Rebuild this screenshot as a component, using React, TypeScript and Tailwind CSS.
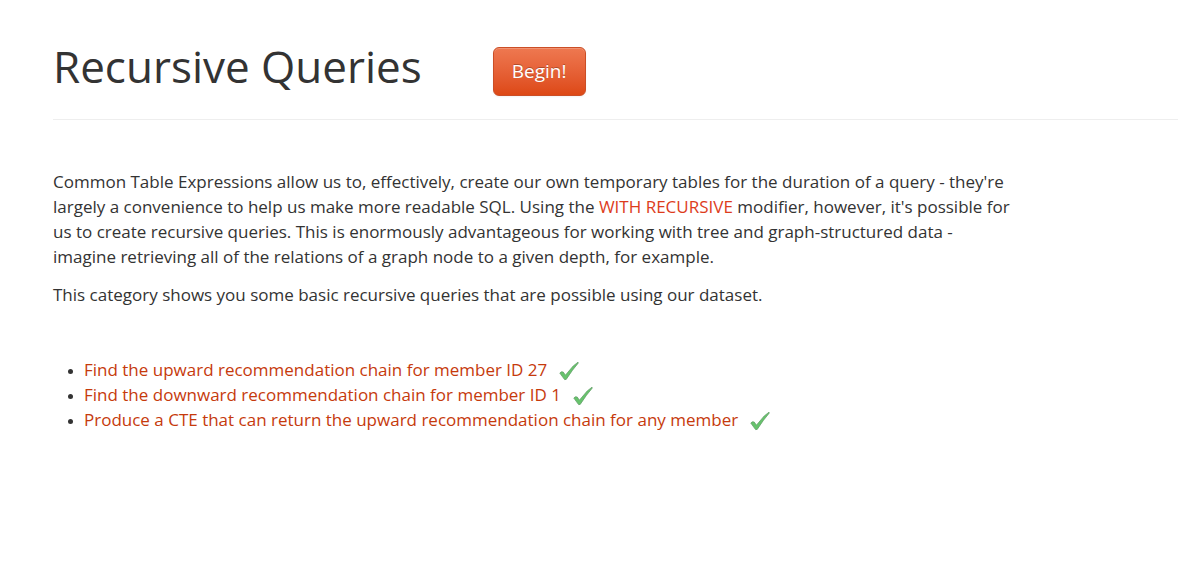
const tasks = [
  { id: "upward", title: "Find the upward recommendation chain for member ID 27" },
  { id: "downward", title: "Find the downward recommendation chain for member ID 1" },
  { id: "cte", title: "Produce a CTE that can return the upward recommendation chain for any member" },
];

function Check() {
  return (
    <svg className="ml-3 inline-block size-5 align-middle" viewBox="0 0 20 20" role="img" aria-label="Completed">
      <path
        d="M0.8 12 L2.4 10.8 L4.2 11 L6.4 14.2 L14.2 5 L19 1.2 L19.3 2 L13.5 9.2 L7.2 18.4 L5.6 18.6 Z"
        fill="#66c46c"
        stroke="#659f6a"
        strokeWidth="0.8"
        strokeLinejoin="round"
      />
    </svg>
  );
}

export default function App() {
  return (
    <main className="pt-10 pl-[53px] font-['Open_Sans',sans-serif] text-[17px] leading-[25px] text-[#333333]">
      <header className="flex items-end gap-[71px] border-b border-[#eeeeee] pb-[23px]">
        <h1 className="pb-1 text-[44px] leading-[52px]">Recursive Queries</h1>
        <button
          type="button"
          className="h-[49px] rounded-md border border-[#cb4e26] bg-linear-to-b from-[#ee7850] to-[#dd4814] px-[18px] text-[19px] font-medium text-white shadow-[inset_0_1px_0_rgba(255,255,255,0.2),0_1px_2px_rgba(0,0,0,0.05)] [text-shadow:0_-1px_0_rgba(0,0,0,0.25)]"
        >
          Begin!
        </button>
      </header>
      <section className="mt-[49px] flex max-w-[960px] flex-col gap-[13px]">
        <p>
          Common Table Expressions allow us to, effectively, create our own temporary tables for the duration of a query - they're
          largely a convenience to help us make more readable SQL. Using the{" "}
          <a href="#with-recursive" className="text-[#dd3c1c]">WITH RECURSIVE</a> modifier, however, it's possible for us to create
          recursive queries. This is enormously advantageous for working with tree and graph-structured data - imagine retrieving
          all of the relations of a graph node to a given depth, for example.
        </p>
        <p>This category shows you some basic recursive queries that are possible using our dataset.</p>
      </section>
      <ul className="mt-[50px] list-disc pl-[31px] marker:text-[13px]">
        {tasks.map((task) => (
          <li key={task.id}>
            <a href={`#${task.id}`} className="text-[#c63a0c]">{task.title}</a>
            <Check />
          </li>
        ))}
      </ul>
    </main>
  );
}
